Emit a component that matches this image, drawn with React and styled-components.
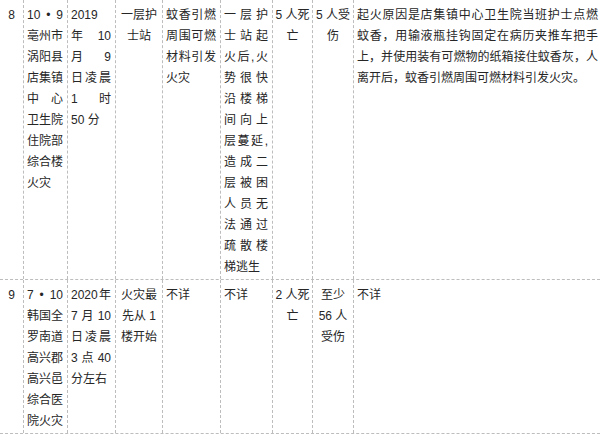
import styled, { createGlobalStyle } from 'styled-components';

const GlobalStyle = createGlobalStyle`
  html, body {
    margin: 0;
    padding: 0;
    background: #fff;
  }
  body {
    font-family: "Liberation Sans", "Noto Sans CJK SC", sans-serif;
    color: #262626;
    overflow: hidden;
  }
`;

// alignment of each column, widths are in the grid template below
const columns = ['center', 'justify', 'justify', 'center', 'justify', 'justify', 'center', 'center', 'justify'];

const rows = [
  [
    ['8'],
    ['10 • 9', '亳州市', '涡阳县', '店集镇', '中心', '卫生院', '住院部', '综合楼', '火灾'],
    ['2019', '年 10', '月 9', '日凌晨', '1 时', '50 分'],
    ['一层护', '士站'],
    ['蚊香引燃', '周围可燃', '材料引发', '火灾'],
    ['一层护', '士站起', '火后,火', '势很快', '沿楼梯', '间向上', '层蔓延,', '造成二', '层被困', '人员无', '法通过', '疏散楼', '梯逃生'],
    ['5 人死', '亡'],
    ['5 人受', '伤'],
    [
      '起火原因是店集镇中心卫生院当班护士点燃',
      '蚊香，用输液瓶挂钩固定在病历夹推车把手',
      '上，并使用装有可燃物的纸箱接住蚊香灰，人',
      '离开后，蚊香引燃周围可燃材料引发火灾。',
    ],
  ],
  [
    ['9'],
    ['7 • 10', '韩国全', '罗南道', '高兴郡', '高兴邑', '综合医', '院火灾'],
    ['2020年', '7 月 10', '日凌晨', '3 点 40', '分左右'],
    ['火灾最', '先从 1', '楼开始'],
    ['不详'],
    ['不详'],
    ['2 人死', '亡'],
    ['至少', '56 人', '受伤'],
    ['不详'],
  ],
];

const App = () => {
  return (
    <>
      <GlobalStyle />
      <Table>
        {rows.map((row, r) => (
          <Row key={r}>
            {row.map((lines, c) => (
              <Cell key={c} $align={columns[c]}>
                {lines.map((line, i) => (
                  <Line
                    key={i}
                    $align={columns[c]}
                    $justify={columns[c] === 'justify' && i < lines.length - 1}
                  >
                    {line}
                  </Line>
                ))}
              </Cell>
            ))}
          </Row>
        ))}
      </Table>
    </>
  );
};

const Table = styled.div`
  width: 600px;
  font-size: 12px;
  line-height: 21px;
`;

const Row = styled.div`
  display: grid;
  grid-template-columns: 23px 44px 48px 47px 58px 52px 40px 41px 1fr;
  border-bottom: 1px dashed #bdbdbd;
`;

const Cell = styled.div`
  padding: ${(p) => (p.$align === 'center' ? '5px 1px 1px 1px' : '5px 4px 1px 3px')};
  border-left: 1px dashed #bdbdbd;
  &:first-child {
    border-left: none;
  }
  &:last-child {
    padding-right: 2px;
  }
`;

const Line = styled.div`
  white-space: nowrap;
  text-align: ${(p) => (p.$align === 'center' ? 'center' : 'left')};
  text-align-last: ${(p) => (p.$justify ? 'justify' : 'auto')};
`;

export default App;
